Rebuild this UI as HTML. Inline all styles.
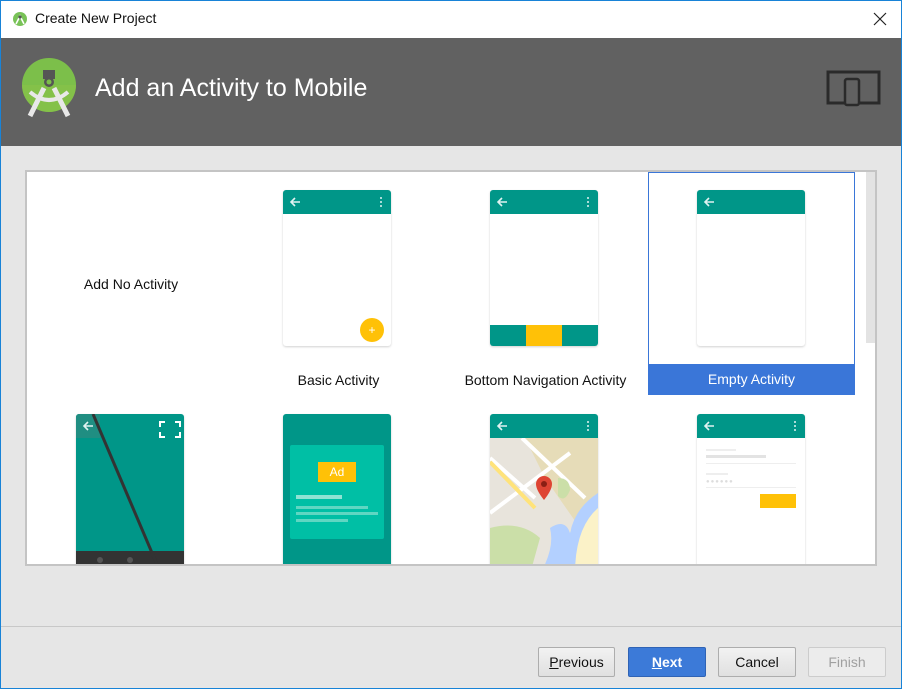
<!DOCTYPE html>
<html><head><meta charset="utf-8"><style>
*{margin:0;padding:0;box-sizing:border-box}
body{width:902px;height:689px;overflow:hidden;background:#e6e6e6;font-family:"Segoe UI","Liberation Sans",sans-serif;position:relative}
.a{position:absolute}
.ph{position:absolute;width:108px;background:#fff;border-radius:3px;box-shadow:0 1px 2px rgba(0,0,0,.18);overflow:hidden}
.tb{position:absolute;left:0;top:0;width:108px;height:24px;background:#009688}
.lbl{position:absolute;font-size:14px;color:#111;text-align:center;width:207px}
.btn{position:absolute;top:647px;height:30px;width:77px;border:1px solid #adadad;border-radius:2px;background:linear-gradient(#f2f2f2,#e0e0e0);font-size:14px;text-align:center;line-height:28px;color:#111}
</style></head><body>
<div class="a" style="left:0;top:0;width:902px;height:689px;border:1px solid #1883d7;z-index:10;pointer-events:none"></div>
<div class="a" style="left:0;top:0;width:902px;height:38px;background:#fff"></div>
<svg class="a" style="left:12px;top:11px" width="16" height="16" viewBox="0 0 16 16"><circle cx="8" cy="8" r="7" fill="#78c257"/><path d="M4 13 L8 5 L12 13" stroke="#fff" stroke-width="1.6" fill="none"/><circle cx="8" cy="6" r="1.6" fill="#555"/></svg>
<div class="a" style="left:35px;top:10px;font-size:14px;color:#111">Create New Project</div>
<svg class="a" style="left:873px;top:12px" width="14" height="14"><path d="M1 1L13 13M13 1L1 13" stroke="#222" stroke-width="1.2"/></svg>
<div class="a" style="left:1px;top:38px;width:900px;height:108px;background:#616161"></div>
<svg class="a" style="left:22px;top:58px" width="56" height="60" viewBox="0 0 56 60"><circle cx="27" cy="27" r="27" fill="#7cbf4a"/><path d="M0 27 A27 27 0 0 0 54 27Z" fill="#8bc34a" opacity=".6"/><rect x="21" y="12" width="12" height="9" fill="#555"/><circle cx="27" cy="24" r="5" fill="#555"/><circle cx="27" cy="24" r="2.5" fill="#7cbf4a"/><path d="M22 30 L8 58 M32 30 L46 58" stroke="#e8e8e8" stroke-width="5"/><path d="M8 34 Q27 50 46 34" stroke="#e8e8e8" stroke-width="4" fill="none"/></svg>
<div class="a" style="left:95px;top:74px;font-size:25px;color:#fff;font-weight:300">Add an Activity to Mobile</div>
<svg class="a" style="left:826px;top:70px" width="55" height="37"><rect x="2" y="2" width="51" height="31" fill="none" stroke="#2a2a2a" stroke-width="3"/><rect x="19" y="9" width="14" height="26" rx="2" fill="#616161" stroke="#2a2a2a" stroke-width="2.5"/></svg>

<div class="a" style="left:25px;top:170px;width:852px;height:396px;background:#fff;border:2px solid #c4c4c4;overflow:hidden">
<div class="a" style="left:839px;top:0;width:11px;height:171px;background:#e3e3e3"></div>
</div>
<div class="a" style="left:27px;top:172px;width:838px;height:392px;overflow:hidden">
 <div class="lbl" style="left:0;top:104px;width:208px">Add No Activity</div>
 <div class="ph" style="left:256px;top:18px;height:156px"><div class="tb"></div>
  <div class="a" style="left:77px;top:128px;width:24px;height:24px;border-radius:50%;background:#ffc107;color:#fff;font-size:12px;text-align:center;line-height:24px">+</div></div>
 <div class="lbl" style="left:208px;top:200px">Basic Activity</div>
 <div class="ph" style="left:463px;top:18px;height:156px"><div class="tb"></div>
  <div class="a" style="left:0;top:135px;width:108px;height:21px;background:#009688"></div>
  <div class="a" style="left:36px;top:135px;width:36px;height:21px;background:#ffc107"></div></div>
 <div class="lbl" style="left:415px;top:200px">Bottom Navigation Activity</div>
 <div class="a" style="left:621px;top:0;width:207px;height:223px;border:1px solid #3a76d8;background:#fff"></div>
 <div class="a" style="left:621px;top:192px;width:207px;height:31px;background:#3a76d8"></div>
 <div class="ph" style="left:670px;top:18px;height:156px"><div class="tb"></div></div>
 <div class="lbl" style="left:621px;top:199px;color:#fff">Empty Activity</div>
 <div class="ph" style="left:49px;top:242px;height:160px;background:#009688">
  <div class="a" style="left:0;top:0;width:24px;height:24px;background:#208e82"></div>
  <div class="a" style="left:0;top:137px;width:108px;height:23px;background:#333"></div>
  <svg class="a" style="left:0;top:0" width="108" height="160"><path d="M17 0 L85 160" stroke="#333" stroke-width="3"/><circle cx="24" cy="146" r="3" fill="#555"/><circle cx="54" cy="146" r="3" fill="#555"/><path d="M84 13v-5h5M99 8h5v5M104 18v5h-5M89 23h-5v-5" stroke="#fff" stroke-width="2" fill="none"/></svg></div>
 <div class="ph" style="left:256px;top:242px;height:160px;background:#009688">
  <div class="a" style="left:7px;top:31px;width:94px;height:94px;background:#00bfa5;border-radius:2px"></div>
  <div class="a" style="left:35px;top:48px;width:38px;height:20px;background:#ffc107;color:#fff;font-size:12px;text-align:center;line-height:20px">Ad</div>
  <div class="a" style="left:13px;top:81px;width:46px;height:4px;background:#8fe3d4"></div>
  <div class="a" style="left:13px;top:92px;width:72px;height:3px;background:#5fd6c2"></div>
  <div class="a" style="left:13px;top:98px;width:82px;height:3px;background:#5fd6c2"></div>
  <div class="a" style="left:13px;top:105px;width:52px;height:3px;background:#5fd6c2"></div></div>
 <div class="ph" style="left:463px;top:242px;height:160px">
  <svg class="a" style="left:0;top:24px" width="108" height="136"><rect width="108" height="136" fill="#e8e4dc"/><path d="M35 0H108V80L90 90L55 40Z" fill="#e6dcb8"/><path d="M0 90Q30 82 50 100L40 136H0Z" fill="#cbdfa8"/><path d="M108 60Q80 80 75 110Q70 130 60 136H108Z" fill="#fbf2c8"/><path d="M108 70Q85 90 85 136H50Q65 110 60 90Q75 80 80 95Q85 70 108 55Z" fill="#b3d0ff"/><path d="M32 0L95 60M0 75L80 15M0 20L45 60" stroke="#fff" stroke-width="4" fill="none"/><path d="M0 24L45 70" stroke="#ffe37a" stroke-width="4"/><path d="M68 40Q80 40 80 52Q75 65 68 58Z" fill="#cbdfa8"/><path d="M54 62Q46 52 46 46A8 8 0 0 1 62 46Q62 52 54 62Z" fill="#de4433"/><circle cx="54" cy="46" r="3" fill="#8b1f14"/></svg>
  <div class="tb"></div></div>
 <div class="ph" style="left:670px;top:242px;height:160px"><div class="tb"></div>
  <div class="a" style="left:9px;top:35px;width:30px;height:2px;background:#eee"></div>
  <div class="a" style="left:9px;top:41px;width:60px;height:3px;background:#e3e3e3"></div>
  <div class="a" style="left:9px;top:49px;width:90px;height:1px;background:#eee"></div>
  <div class="a" style="left:9px;top:59px;width:22px;height:2px;background:#eee"></div>
  <div class="a" style="left:9px;top:65px;color:#ddd;font-size:6px;letter-spacing:1px">●●●●●●</div>
  <div class="a" style="left:9px;top:73px;width:90px;height:1px;background:#eee"></div>
  <div class="a" style="left:63px;top:80px;width:36px;height:14px;background:#ffc107"></div></div>
</div>
<div class="a" style="left:27px;top:172px;width:838px;height:392px;overflow:hidden;pointer-events:none">
 <svg class="a" style="left:0;top:0" width="838" height="392"><g stroke="#e0f2f1" stroke-width="1.6" fill="none">
 <path d="M264 30h9M268 26l-4 4 4 4"/><path d="M471 30h9M475 26l-4 4 4 4"/><path d="M678 30h9M682 26l-4 4 4 4"/>
 <path d="M57 254h9M61 250l-4 4 4 4"/><path d="M471 254h9M475 250l-4 4 4 4"/><path d="M678 254h9M682 250l-4 4 4 4"/></g>
 <g fill="#e0f2f1"><circle cx="354" cy="26" r="1"/><circle cx="354" cy="30" r="1"/><circle cx="354" cy="34" r="1"/>
 <circle cx="561" cy="26" r="1"/><circle cx="561" cy="30" r="1"/><circle cx="561" cy="34" r="1"/>
 <circle cx="561" cy="250" r="1"/><circle cx="561" cy="254" r="1"/><circle cx="561" cy="258" r="1"/>
 <circle cx="768" cy="250" r="1"/><circle cx="768" cy="254" r="1"/><circle cx="768" cy="258" r="1"/></g></svg>
</div>

<div class="a" style="left:1px;top:626px;width:900px;height:1px;background:#c8c8c8"></div>
<div class="btn" style="left:538px;width:77px"><u>P</u>revious</div>
<div class="btn" style="left:628px;width:78px;background:#3c7ad8;border-color:#2f63b5;color:#fff;font-weight:bold"><u>N</u>ext</div>
<div class="btn" style="left:718px;width:78px">Cancel</div>
<div class="btn" style="left:808px;width:78px;background:#ececec;border-color:#ccc;color:#a0a0a0">Finish</div>
</body></html>
